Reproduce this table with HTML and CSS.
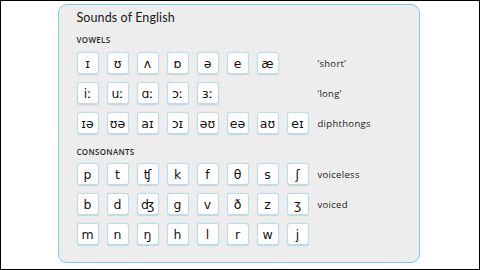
FILE: index.html
```html
<!DOCTYPE html>
<html>
<head>
<meta charset="utf-8">
<link rel="stylesheet" href="styles.css">
</head>
<body>
<div class="frame">
  <div class="panel">
    <div class="title">Sounds of English</div>
    <div class="section">VOWELS</div>
    <div class="grid vowels">
      <div class="tile">ɪ</div><div class="tile">ʊ</div><div class="tile">ʌ</div><div class="tile">ɒ</div><div class="tile">ə</div><div class="tile">e</div><div class="tile">æ</div><div class="skip"></div>
      <div class="label">‘short’</div>
      <div class="tile">iː</div><div class="tile">uː</div><div class="tile">ɑː</div><div class="tile">ɔː</div><div class="tile">ɜː</div><div class="skip"></div><div class="skip"></div><div class="skip"></div>
      <div class="label">‘long’</div>
      <div class="tile">ɪə</div><div class="tile">ʊə</div><div class="tile">aɪ</div><div class="tile">ɔɪ</div><div class="tile">əʊ</div><div class="tile">eə</div><div class="tile">aʊ</div><div class="tile">eɪ</div>
      <div class="label">diphthongs</div>
    </div>
    <div class="section cons">CONSONANTS</div>
    <div class="grid consonants">
      <div class="tile">p</div><div class="tile">t</div><div class="tile">ʧ</div><div class="tile">k</div><div class="tile">f</div><div class="tile">θ</div><div class="tile">s</div><div class="tile">ʃ</div>
      <div class="label">voiceless</div>
      <div class="tile">b</div><div class="tile">d</div><div class="tile">ʤ</div><div class="tile">g</div><div class="tile">v</div><div class="tile">ð</div><div class="tile">z</div><div class="tile">ʒ</div>
      <div class="label">voiced</div>
      <div class="tile">m</div><div class="tile">n</div><div class="tile">ŋ</div><div class="tile">h</div><div class="tile">l</div><div class="tile">r</div><div class="tile">w</div><div class="tile">j</div>
      <div class="label"></div>
    </div>
  </div>
</div>
</body>
</html>
```

FILE: styles.css
```css
html, body {
  margin: 0;
  padding: 0;
  background: #fff;
}
.frame {
  width: 480px;
  height: 270px;
  box-sizing: border-box;
  border: 1px solid #000;
  background: #fff;
  padding: 3px 0 0 57px;
}
.panel {
  width: 362px;
  height: 259px;
  box-sizing: border-box;
  background: #ededed;
  border: 1.5px solid #7ccbe4;
  border-radius: 9px;
  padding: 5px 0 0 17.5px;
  font-family: "Open Sans", "DejaVu Sans", sans-serif;
  color: #222;
}
.title {
  font-family: "Lato", "Open Sans", sans-serif;
  font-size: 12.5px;
  line-height: 16px;
  letter-spacing: 0.1px;
  color: #1a1a1a;
}
.section {
  font-size: 8px;
  line-height: 10px;
  margin-top: 9px;
  letter-spacing: 0.3px;
  font-weight: 600;
  color: #2a2a2a;
}
.section.cons {
  margin-top: 13px;
}
.grid {
  display: grid;
  grid-template-columns: repeat(8, 22px) auto;
  grid-auto-rows: 22px;
  column-gap: 8px;
  row-gap: 8px;
  margin-top: 7px;
}
.consonants {
  margin-top: 6px;
}
.tile {
  box-sizing: border-box;
  background: #fff;
  border: 1.5px solid #b8dfea;
  border-radius: 3px;
  box-shadow: 0 0.5px 1px rgba(120, 170, 190, 0.35);
  display: flex;
  align-items: center;
  justify-content: center;
  font-family: "DejaVu Sans", sans-serif;
  font-size: 12.5px;
  color: #111;
}
.label {
  display: flex;
  align-items: center;
  font-size: 9.5px;
  color: #222;
  padding-left: 1px;
  letter-spacing: 0.3px;
}
```
